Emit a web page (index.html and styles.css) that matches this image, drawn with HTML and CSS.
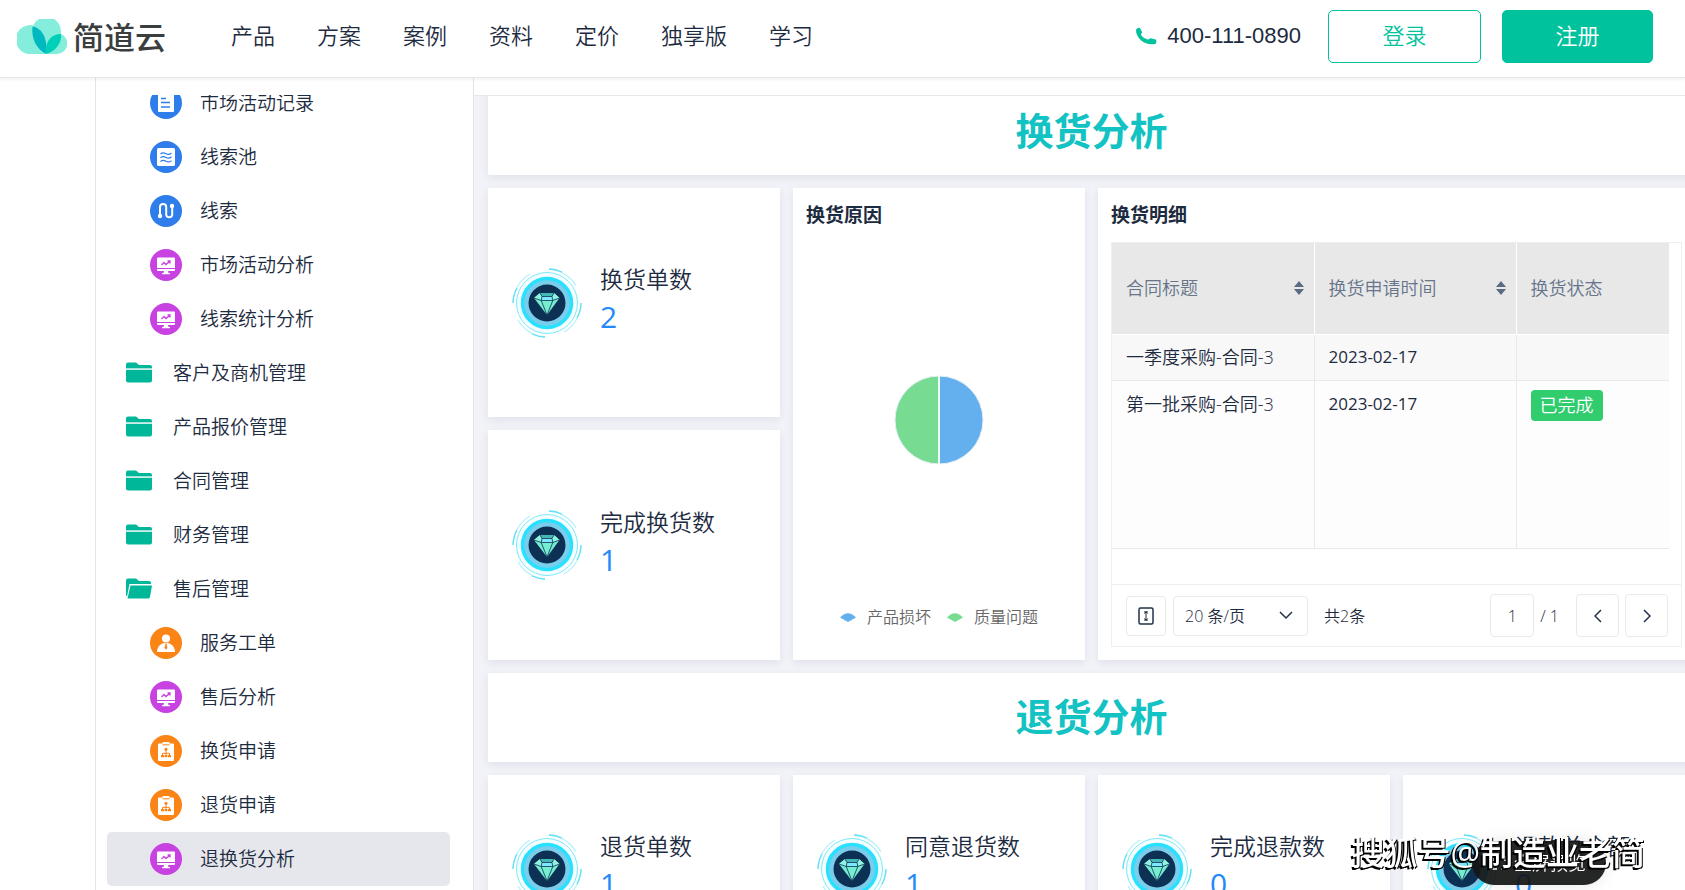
FILE: index.html
```html
<!DOCTYPE html>
<html lang="zh-CN">
<head>
<meta charset="utf-8">
<title>简道云 - 退换货分析</title>
<link rel="stylesheet" href="styles.css">
</head>
<body>
<svg class="defs" aria-hidden="true">
  <defs>
    <symbol id="i-doc" viewBox="0 0 32 32"><circle cx="16" cy="16" r="16" fill="#2f7deb"/><rect x="8" y="5" width="16" height="20" rx="1" fill="#fff"/><path d="M11 11.500h5M11 15.500h9M11 20h9" stroke="#2f7deb" stroke-width="1.500"/></symbol>
    <symbol id="i-pool" viewBox="0 0 32 32"><circle cx="16" cy="16" r="16" fill="#2f7deb"/><rect x="7" y="7" width="18" height="18" rx="1.500" fill="#fff"/><path d="M10.500 13c2-2 3.500-1.500 5.500-.3s3.500 1 5.500-.7M10.500 16.800c2-2 3.500-1.500 5.500-.3s3.500 1 5.500-.7M10.500 20.600c2-2 3.500-1.500 5.500-.3s3.500 1 5.500-.7" fill="none" stroke="#2f7deb" stroke-width="1.200"/></symbol>
    <symbol id="i-lead" viewBox="0 0 32 32"><circle cx="16" cy="16" r="16" fill="#2f7deb"/><circle cx="10" cy="21" r="2.200" fill="#fff"/><circle cx="22" cy="11" r="2.200" fill="#fff"/><path d="M10 21v-9a3.100 3.100 0 0 1 6.200 0v8a3.100 3.100 0 0 0 6 0v-9" fill="none" stroke="#fff" stroke-width="2"/></symbol>
    <symbol id="i-chart" viewBox="0 0 32 32"><circle cx="16" cy="16" r="16" fill="#c742e0"/><path d="M8 8.500h16a1 1 0 0 1 1 1v9.500H7V9.500a1 1 0 0 1 1-1zM7 20h18v1a1 1 0 0 1-1 1H8a1 1 0 0 1-1-1zM14 22h4l.5 2h1.500v1.200h-8V24h1.500z" fill="#fff"/><path d="M11.500 16l2.500-2.500 2 2 3.500-3M17.500 12h2.500v2.500" fill="none" stroke="#c742e0" stroke-width="1.300"/></symbol>
    <symbol id="i-person" viewBox="0 0 32 32"><circle cx="16" cy="16" r="16" fill="#fb8416"/><circle cx="16" cy="11.500" r="4" fill="#fff"/><path d="M7 25c0-5 3.500-8.500 7.500-9h3c4 .5 7.500 4 7.500 9z" fill="#fff"/><path d="M15 16.500h2l-.4 1.300.9 3.200-1.500 1.500-1.500-1.500.9-3.200z" fill="#fb8416"/></symbol>
    <symbol id="i-clip" viewBox="0 0 32 32"><circle cx="16" cy="16" r="16" fill="#fb8416"/><path d="M9 8.500h3.500V8a1 1 0 0 1 1-1h5a1 1 0 0 1 1 1v.5H23a1 1 0 0 1 1 1V25a1 1 0 0 1-1 1H9a1 1 0 0 1-1-1V9.500a1 1 0 0 1 1-1z" fill="#fff"/><path d="M12.500 9.800h7M16 15v5M12.500 20.500v-2.200h7v2.200" fill="none" stroke="#fb8416"/><circle cx="16" cy="14.300" r="1.500" fill="#fb8416"/><path d="M11 20h3v2.200h-3zM14.600 20h2.800v2.200h-2.800zM18 20h3v2.200h-3z" fill="#fb8416"/></symbol>
    <symbol id="i-folder" viewBox="0 0 26 22"><path d="M2 .5h8l3 2.500h11a2 2 0 0 1 2 2V6.500H0V2.500a2 2 0 0 1 2-2zM0 8h26V18.500a2 2 0 0 1-2 2H2a2 2 0 0 1-2-2z" fill="#00b899"/><path d="M0 6.500h26v1.500H0z" fill="#c9efe8"/></symbol>
    <symbol id="i-open" viewBox="0 0 26 22"><path d="M2 .5h8l3 2.500h10a2 2 0 0 1 2 2V6H3.500L1 18.500c-.6-.3-1-1-1-1.500V2.500a2 2 0 0 1 2-2zM4.500 7.500H26l-2 11.500a2 2 0 0 1-1.500 1.500H1.500z" fill="#00b899"/></symbol>
    <symbol id="i-gem" viewBox="0 0 70 70">
      <circle cx="35" cy="35" r="30.500" fill="#f4fdff" stroke="#7ee9f8"/>
      <g fill="none" stroke="#63e2f5" stroke-width="1.300"><path d="M37 1a34 34 0 0 1 27 17M69 35a34 34 0 0 1-17 29M33 69a34 34 0 0 1-27-17M1 35a34 34 0 0 1 17-29" opacity=".45"/><path d="M37 1a34 34 0 0 1 13 3M69 35a34 34 0 0 1-4 15M33 69a34 34 0 0 1-13-3M1 35a34 34 0 0 1 4-15"/></g>
      <circle cx="35" cy="35" r="24.500" fill="#7bcdec" stroke="#29e1ff" stroke-width="3.500"/>
      <circle cx="35" cy="35" r="18.500" fill="#0d3155"/>
      <path d="M28 25h14l5.500 5L35 47 22 30z" fill="#76ecd0"/>
      <path d="M28 25h14l-2 3.500H30z" fill="#43b8b5"/><path d="M30 28.500h10l.8 4H29.200z" fill="#7de9ff"/><path d="M28 25l2 3.500-.8 4L22 30zM42 25l-2 3.500.8 4 6.700-2.500z" fill="#8ff3de"/>
      <path d="M30 28.500h10l.8 4H29.200zM22 30l7.200 2.500L35 47l5.800-14.500 6.700-2.500M28 25l2 3.500M42 25l-2 3.500" fill="none" stroke="#0d3155" stroke-width=".8"/>
    </symbol>
    <symbol id="i-sort" viewBox="0 0 10 14"><path d="M5 0l5 6H0zM5 14l5-6H0z" fill="#5b6b82"/></symbol>
  </defs>
</svg>

<header class="header">
  <a class="logo" href="#">
    <svg class="logo-mark" viewBox="0 0 50 35" aria-hidden="true"><path d="M14.500 35a14.500 14.500 0 1 1 1.800-28.600A14.500 14.500 0 0 1 43.800 14.800 10.500 10.500 0 0 1 40 35z" fill="#85eddc"/><path d="M29.500 35C20 31 14 20 15.500 7.500 24 9 30.500 17 29.500 35z" fill="#00b8c0"/><path d="M29.500 35c-2-10 3-20 14.500-20 .8 9-4.500 16.500-14.500 20z" fill="#00d0b8"/></svg>
    <span>简道云</span>
  </a>
  <nav class="nav">
    <a href="#">产品</a><a href="#">方案</a><a href="#">案例</a><a href="#">资料</a><a href="#">定价</a><a href="#">独享版</a><a href="#">学习</a>
  </nav>
  <div class="account">
    <a class="phone" href="tel:4001110890">
      <svg viewBox="0 0 22 18" aria-hidden="true"><path d="M1 3C1 1.500 4 0 5 1l2 4c.4 1-1.300 2-1 2.800C7 10 10 12 13 12.500c1 .2 1.600-1.500 2.600-1.300l5 1.300c1.400.5.9 4-.6 4.500C11 19 1 12 1 3z" fill="#00c29c"/></svg>
      400-111-0890
    </a>
    <button class="btn btn-line" type="button">登录</button>
    <button class="btn btn-fill" type="button">注册</button>
  </div>
</header>

<div class="page">
  <aside class="side">
    <ul class="menu">
      <li><a class="item" href="#"><svg><use href="#i-doc"/></svg>市场活动记录</a></li>
      <li><a class="item" href="#"><svg><use href="#i-pool"/></svg>线索池</a></li>
      <li><a class="item" href="#"><svg><use href="#i-lead"/></svg>线索</a></li>
      <li><a class="item" href="#"><svg><use href="#i-chart"/></svg>市场活动分析</a></li>
      <li><a class="item" href="#"><svg><use href="#i-chart"/></svg>线索统计分析</a></li>
      <li><a class="item group" href="#"><svg><use href="#i-folder"/></svg>客户及商机管理</a></li>
      <li><a class="item group" href="#"><svg><use href="#i-folder"/></svg>产品报价管理</a></li>
      <li><a class="item group" href="#"><svg><use href="#i-folder"/></svg>合同管理</a></li>
      <li><a class="item group" href="#"><svg><use href="#i-folder"/></svg>财务管理</a></li>
      <li><a class="item group" href="#"><svg><use href="#i-open"/></svg>售后管理</a></li>
      <li><a class="item" href="#"><svg><use href="#i-person"/></svg>服务工单</a></li>
      <li><a class="item" href="#"><svg><use href="#i-chart"/></svg>售后分析</a></li>
      <li><a class="item" href="#"><svg><use href="#i-clip"/></svg>换货申请</a></li>
      <li><a class="item" href="#"><svg><use href="#i-clip"/></svg>退货申请</a></li>
      <li><a class="item active" href="#"><svg><use href="#i-chart"/></svg>退换货分析</a></li>
    </ul>
  </aside>

  <main class="main">
    <div class="board">
      <h2 class="card banner">换货分析</h2>

      <section class="card stat"><svg><use href="#i-gem"/></svg><div><h3>换货单数</h3><p>2</p></div></section>

      <section class="card panel tall">
        <h3 class="panel-title">换货原因</h3>
        <svg class="pie" viewBox="0 0 90 90" role="img" aria-label="换货原因"><path d="M45 1a44 44 0 0 1 0 88z" fill="#64b0ee" stroke="#e4eef5"/><path d="M45 1a44 44 0 0 0 0 88z" fill="#78db92" stroke="#e4eef5"/><path d="M45 0v90" stroke="#fff" stroke-width="1.500"/></svg>
        <ul class="legend">
          <li><svg viewBox="0 0 16 9"><path d="M0 4.500Q8-4 16 4.500L8 9z" fill="#64b0ee"/></svg>产品损坏</li>
          <li><svg viewBox="0 0 16 9"><path d="M0 4.500Q8-4 16 4.500L8 9z" fill="#78db92"/></svg>质量问题</li>
        </ul>
      </section>

      <section class="card panel tall wide">
        <h3 class="panel-title">换货明细</h3>
        <div class="grid-box">
          <table class="table">
            <thead>
              <tr>
                <th><div>合同标题<svg><use href="#i-sort"/></svg></div></th>
                <th><div>换货申请时间<svg><use href="#i-sort"/></svg></div></th>
                <th class="last">换货状态</th>
              </tr>
            </thead>
            <tbody>
              <tr class="odd"><td>一季度采购-合同-3</td><td class="date">2023-02-17</td><td></td></tr>
              <tr class="fill"><td>第一批采购-合同-3</td><td class="date">2023-02-17</td><td class="state"><span class="badge">已完成</span></td></tr>
            </tbody>
          </table>
          <div class="pager">
            <button class="box" type="button" aria-label="行高"><svg width="16" height="18" viewBox="0 0 16 18" fill="none" stroke="#223048" stroke-width="1.500"><rect x="1" y="1" width="14" height="16" rx="1.500"/><path d="M8 4v10M6 5h4M6 13h4M6.500 6.500L8 5l1.500 1.500M6.500 11.500L8 13l1.500-1.500" stroke-width="1"/></svg></button>
            <select class="box size" aria-label="每页条数"><option>20 条/页</option></select>
            <span class="total">共2条</span>
            <input class="box num" type="text" value="1" aria-label="页码">
            <span class="pages">/ 1</span>
            <button class="box step" type="button" aria-label="上一页"><svg width="8" height="14" viewBox="0 0 8 14" fill="none" stroke="#223048" stroke-width="1.500"><path d="M7 1L1 7l6 6"/></svg></button>
            <button class="box step" type="button" aria-label="下一页"><svg width="8" height="14" viewBox="0 0 8 14" fill="none" stroke="#223048" stroke-width="1.500"><path d="M1 1l6 6-6 6"/></svg></button>
          </div>
        </div>
      </section>

      <section class="card stat"><svg><use href="#i-gem"/></svg><div><h3>完成换货数</h3><p>1</p></div></section>

      <h2 class="card banner">退货分析</h2>

      <section class="card stat"><svg><use href="#i-gem"/></svg><div><h3>退货单数</h3><p>1</p></div></section>
      <section class="card stat"><svg><use href="#i-gem"/></svg><div><h3>同意退货数</h3><p>1</p></div></section>
      <section class="card stat"><svg><use href="#i-gem"/></svg><div><h3>完成退款数</h3><p>0</p></div></section>
      <section class="card stat"><svg><use href="#i-gem"/></svg><div><h3>退款总金额</h3><p>0</p></div></section>
    </div>
  </main>
</div>

<button class="preview" type="button"><svg width="14" height="14" viewBox="0 0 14 14" fill="none" stroke="#fff" stroke-width="1.500" aria-hidden="true"><path d="M1 5V1h4M9 1h4v4M13 9v4H9M5 13H1V9"/></svg>全屏预览</button>
<div class="watermark">搜狐号@制造业老简</div>
</body>
</html>
```
FILE: styles.css
```css
* { box-sizing: border-box; }

body {
  margin: 0;
  height: 100vh;
  display: flex;
  flex-direction: column;
  overflow: hidden;
  background: #fff;
  color: #1d2b40;
  font: 350 18px/24px "Open Sans", "Noto Sans CJK SC", sans-serif;
}

h2, h3, p, ul { margin: 0; padding: 0; }
ul { list-style: none; }
a { color: inherit; text-decoration: none; }
button, input, select { font: inherit; color: inherit; }
.defs { position: absolute; width: 0; height: 0; }

/* Header */
.header {
  position: relative;
  z-index: 2;
  flex: none;
  display: flex;
  align-items: center;
  padding: 10px 32px 14px 17px;
  border-bottom: 1px solid #e8e8ea;
  box-shadow: 0 1px 4px rgba(0, 0, 0, .08);
  background: #fff;
  font-size: 22px;
}
.logo {
  display: flex;
  align-items: center;
  gap: 6px;
  color: #3b3e3e;
  font-size: 31px;
  font-weight: 500;
  line-height: 36px;
}
.logo-mark { width: 50px; height: 35px; }
.nav { display: flex; gap: 42px; margin-left: 65px; padding-bottom: 4px; }
.account { display: flex; align-items: center; margin-left: auto; }
.phone {
  display: flex;
  align-items: center;
  gap: 10px;
  margin-right: 27px;
  padding-bottom: 2px;
  font: 400 22px/24px "Liberation Sans", sans-serif;
}
.phone svg { width: 22px; height: 18px; }
.btn { height: 53px; border: 1px solid #00c29c; border-radius: 5px; padding: 0 0 4px; }
.btn-line { width: 153px; background: #fff; color: #00c29c; }
.btn-fill { width: 151px; margin-left: 21px; background: #00c29c; color: #fff; }

/* Layout */
.page { flex: 1; min-height: 0; display: flex; padding-left: 95px; }

/* Side menu */
.side {
  flex: none;
  width: 379px;
  padding: 17px 23px 0 11px;
  border: 1px solid #e2e3e6;
  border-width: 0 1px;
}
.menu { height: 100%; overflow: hidden; display: flex; flex-direction: column; justify-content: flex-end; padding-bottom: 4px; }
.item {
  display: flex;
  align-items: center;
  gap: 18px;
  height: 54px;
  padding-left: 43px;
  border-radius: 5px;
  font-size: 19px;
}
.item svg { width: 32px; height: 32px; }
.group { padding-left: 19px; gap: 21px; }
.group svg { width: 26px; height: 22px; }
.active { background: #e6e7ed; }

/* Dashboard */
.main {
  flex: 1;
  min-width: 0;
  margin-top: 17px;
  padding-left: 14px;
  overflow: hidden;
  border-top: 1px solid #e8e8ea;
  background: #f2f3f8;
}
.board {
  display: grid;
  grid-template-columns: repeat(4, 1fr);
  grid-template-rows: 88px 229px 230px 89px 188px;
  gap: 13px;
  margin: -9px -10px 0 0;
}
.card { background: #fff; box-shadow: 0 3px 8px rgba(60, 50, 100, .09); }
.banner {
  grid-column: 1 / -1;
  display: flex;
  align-items: center;
  justify-content: center;
  padding-bottom: 3px;
  color: #13c2c2;
  font-size: 38px;
  font-weight: 700;
  line-height: 44px;
}
.tall { grid-row: span 2; }
.wide { grid-column: span 2; }

.stat { display: flex; align-items: center; gap: 18px; padding-left: 24px; }
.stat svg { width: 70px; height: 70px; }
.stat div { padding-bottom: 7px; }
.stat h3 { font-size: 23px; font-weight: 350; line-height: 36px; }
.stat p { color: #2489f9; font-size: 30px; line-height: 40px; font-weight: 400; }

.panel { display: flex; flex-direction: column; padding: 13px; }
.panel-title { font-size: 19px; font-weight: 700; line-height: 28px; }
.pie { width: 90px; height: 90px; margin: auto; }
.legend {
  display: flex;
  justify-content: center;
  gap: 16px;
  margin-top: -6px;
  padding-bottom: 18px;
  color: #666;
  font-size: 16px;
}
.legend li { display: flex; align-items: center; gap: 11px; }
.legend svg { width: 16px; height: 9px; }

/* Detail table */
.grid-box { flex: 1; display: flex; flex-direction: column; margin-top: 13px; border: 1px solid #eeeff1; }
.table { width: calc(100% - 12px); table-layout: fixed; border-collapse: collapse; }
.table th {
  height: 91px;
  padding: 0 10px 0 14px;
  border-right: 1px solid #fff;
  border-bottom: 1px solid #fff;
  background: #e8e8e8;
  color: #66758b;
  font-weight: 350;
  text-align: left;
}
.table th.last { width: 153px; border-right: 0; }
.table th div { display: flex; align-items: center; justify-content: space-between; }
.table th svg { width: 10px; height: 14px; }
.table td { height: 46px; padding: 10px 14px; border: 1px solid #e8e9eb; vertical-align: top; }
.table td:first-child { border-left: 0; }
.table td:last-child { border-right: 0; }
.table .odd { background: #f8f8f8; }
.table .fill td { height: 168px; padding-top: 11px; background: #fdfdfd; }
.table .fill .state { padding-top: 9px; }
.table .date { font-size: 17px; font-weight: 400; }
.badge { display: inline-block; padding: 3px 9px 4px; border-radius: 4px; background: #30cc6e; color: #fff; }

.pager {
  display: flex;
  align-items: center;
  margin-top: auto;
  padding: 9px 13px 9px 14px;
  border-top: 1px solid #eeeff1;
  font-size: 16px;
}
.box {
  display: flex;
  align-items: center;
  justify-content: center;
  width: 40px;
  height: 40px;
  padding: 0;
  border: 1px solid #e9eaec;
  border-radius: 4px;
  background: #fff;
}
.size {
  appearance: none;
  width: 135px;
  margin: 0 16px 0 7px;
  padding: 0 11px;
  background: #fff url("data:image/svg+xml,%3Csvg xmlns='http://www.w3.org/2000/svg' width='14' height='9'%3E%3Cpath d='M1 1l6 6 6-6' fill='none' stroke='%23223048' stroke-width='1.500'/%3E%3C/svg%3E") no-repeat right 14px center;
}
.num { width: 44px; height: 43px; margin-left: auto; text-align: center; }
.pages { margin: 0 17px 0 6px; }
.step { width: 43px; height: 43px; }
.step + .step { margin-left: 6px; }

/* Floating layers */
.preview {
  position: fixed;
  right: 79px;
  bottom: 5px;
  z-index: 3;
  display: flex;
  align-items: center;
  justify-content: center;
  gap: 8px;
  width: 134px;
  height: 44px;
  padding: 0;
  border: 0;
  border-radius: 22px;
  background: rgba(20, 22, 22, .93);
  box-shadow: 0 0 16px rgba(0, 0, 0, .1);
  color: #fff;
}
.watermark {
  position: fixed;
  right: 40px;
  bottom: 15px;
  z-index: 4;
  color: #fff;
  font-size: 33px;
  font-weight: 500;
  line-height: 44px;
  text-shadow: -2px 2px 0 #000, 1px 1px 0 #000;
}
```
